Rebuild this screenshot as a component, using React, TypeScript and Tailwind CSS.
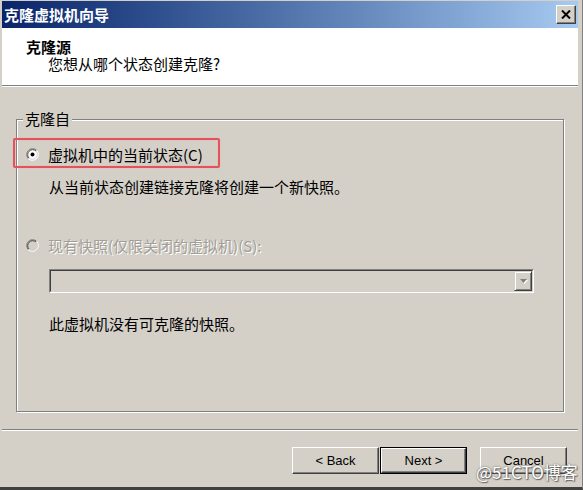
import React from "react";

const Radio = ({ checked, disabled }: { checked?: boolean; disabled?: boolean }) => (
  <svg width="13" height="13" viewBox="0 0 13 13" className="shrink-0">
    <circle cx="6.5" cy="6.5" r="5.5" fill={disabled ? "#d4d0c8" : "#ffffff"} />
    <path d="M2.26 10.74 A6 6 0 0 1 10.74 2.26" stroke="#808080" strokeWidth="1" fill="none" />
    <path d="M10.74 2.26 A6 6 0 0 1 2.26 10.74" stroke="#ffffff" strokeWidth="1" fill="none" />
    <path d="M2.97 10.03 A5 5 0 0 1 10.03 2.97" stroke="#404040" strokeWidth="1" fill="none" />
    <path d="M10.03 2.97 A5 5 0 0 1 2.97 10.03" stroke="#d4d0c8" strokeWidth="1" fill="none" />
    {checked && <circle cx="6.5" cy="6.5" r="2" fill="#000" />}
  </svg>
);

const Btn = ({ label, def }: { label: string; def?: boolean }) => (
  <div className={def ? "border border-black" : ""}>
    <div
      className={`flex items-center justify-center bg-[#d4d0c8] border-t border-l border-white border-r border-b border-r-[#404040] border-b-[#404040] shadow-[inset_-1px_-1px_0_#808080] ${
        def ? "w-[85px] h-[25px]" : "w-[87px] h-[27px]"
      }`}
    >
      <span className="font-['Liberation_Sans',sans-serif] text-[13px] leading-none text-black">{label}</span>
    </div>
  </div>
);

export default function App() {
  const cjk = "font-['Noto_Sans_CJK_SC',sans-serif]";
  return (
    <div className="relative w-[583px] h-[490px] bg-[#d4d0c8] overflow-hidden flex flex-col pl-[2px] pr-[4px] pt-[1px] border-b-[3px] border-b-[#404040] border-r border-r-[#808080]">
      {/* title bar */}
      <div className="h-[27px] flex items-center justify-between bg-gradient-to-r from-[#0a246a] to-[#a6caf0] pl-[2px] pr-[2px]">
        <span className={`${cjk} text-[15px] font-bold text-white leading-none`}>克隆虚拟机向导</span>
        <div className="w-[20px] h-[19px] bg-[#d4d0c8] border-t border-l border-white border-r border-b border-r-[#404040] border-b-[#404040] shadow-[inset_-1px_-1px_0_#808080] flex items-center justify-center">
          <svg width="10" height="9" viewBox="0 0 10 9">
            <path d="M1 0.5 L9 8.5 M9 0.5 L1 8.5" stroke="#000" strokeWidth="2" />
          </svg>
        </div>
      </div>
      {/* header */}
      <div className="h-[57px] bg-white flex flex-col pl-[24px] pt-[10px]">
        <div className={`${cjk} text-[15px] font-bold text-black leading-[17px]`}>克隆源</div>
        <div className={`${cjk} text-[15px] text-black leading-[17px] pl-[22px]`}>您想从哪个状态创建克隆?</div>
      </div>
      <div className="h-px bg-[#808080]" />
      <div className="h-px bg-white" />
      {/* body */}
      <div className="h-[342px] pt-[32px] pl-[14px]">
        <div className="relative w-[548px] h-[293px] border border-[#808080] shadow-[inset_1px_1px_0_#fff,1px_1px_0_#fff] pt-[24px] pl-[8px]">
          <div className={`absolute left-[6px] top-[-10px] bg-[#d4d0c8] px-[2px] ${cjk} text-[15px] leading-[18px] text-black`}>
            克隆自
          </div>
          <div className="relative h-[20px] flex items-center gap-[9px] pl-[1px]">
            <Radio checked />
            <span className={`${cjk} text-[15px] leading-none text-black`}>虚拟机中的当前状态(C)</span>
            <div className="absolute left-[-12px] top-[-6px] w-[207px] h-[30px] border-2 border-[#e4525c] rounded-[2px] shadow-[0_0_1px_#f08a90,inset_0_0_1px_#f08a90]" />
          </div>
          <div className={`mt-[12px] h-[20px] flex items-center pl-[24px] ${cjk} text-[15px] leading-none text-black`}>
            从当前状态创建链接克隆将创建一个新快照。
          </div>
          <div className="mt-[39px] h-[20px] flex items-center gap-[9px] pl-[1px]">
            <Radio disabled />
            <span className={`${cjk} text-[15px] leading-none text-[#a19e97] [text-shadow:1px_1px_0_#fff]`}>
              现有快照(仅限关闭的虚拟机)(S):
            </span>
          </div>
          <div className="mt-[14px] ml-[24px] w-[485px] h-[24px] border-t border-l border-[#808080] border-r border-b border-r-white border-b-white">
            <div className="w-full h-full border-t border-l border-[#404040] border-r border-b border-r-[#d4d0c8] border-b-[#d4d0c8] flex justify-end bg-[#d4d0c8]">
              <div className="w-[18px] h-full bg-[#d4d0c8] border-t border-l border-[#d4d0c8] border-r border-b border-r-[#404040] border-b-[#404040] shadow-[inset_1px_1px_0_#fff,inset_-1px_-1px_0_#808080] flex items-center justify-center">
                <svg width="9" height="6" viewBox="0 0 9 6">
                  <path d="M1 1 L8 1 L4.5 5 Z" fill="#fff" transform="translate(1 1)" />
                  <path d="M1 1 L8 1 L4.5 5 Z" fill="#808080" />
                </svg>
              </div>
            </div>
          </div>
          <div className={`mt-[20px] h-[20px] flex items-center pl-[24px] ${cjk} text-[15px] leading-none text-black`}>
            此虚拟机没有可克隆的快照。
          </div>
        </div>
      </div>
      <div className="h-px bg-[#808080]" />
      <div className="h-px bg-white" />
      {/* buttons */}
      <div className="pt-[16px] pl-[290px] flex items-start">
        <Btn label="< Back" />
        <div className="ml-[1px]">
          <Btn label="Next >" def />
        </div>
        <div className="ml-[13px]">
          <Btn label="Cancel" />
        </div>
      </div>
      <div className={`absolute left-[476px] top-[463px] ${cjk} text-[17px] leading-none text-white [text-shadow:0_0_2px_#555,1px_1px_1px_#666]`}>
        @51CTO博客
      </div>
    </div>
  );
}
